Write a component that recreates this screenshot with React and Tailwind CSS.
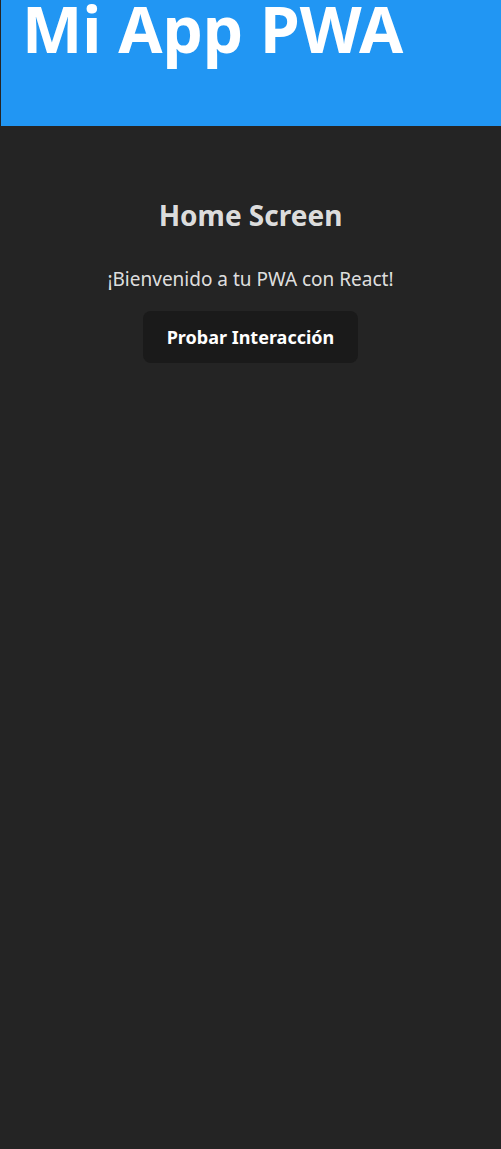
import React from "react";

export default function App() {
  return (
    <div className="min-h-[1149px] bg-[#242424] text-[rgba(255,255,255,0.87)] font-['Noto_Sans','Open_Sans',sans-serif]">
      {/* header */}
      <header className="h-[126px] bg-[#2196f3] border-l border-[#242424] px-[21px] overflow-hidden">
        <h1 className="text-[64px] leading-[0.92] font-bold text-white">Mi App PWA</h1>
      </header>

      {/* contenido */}
      <main className="flex flex-col items-center pt-[73px]">
        <h2 className="text-[28px] font-bold leading-[1.2]">Home Screen</h2>
        <p className="mt-[32px] text-[19px]">¡Bienvenido a tu PWA con React!</p>
        <button className="mt-[18px] w-[215px] h-[52px] rounded-lg bg-[#1a1a1a] text-white text-[18px] font-bold">
          Probar Interacción
        </button>
      </main>
    </div>
  );
}
